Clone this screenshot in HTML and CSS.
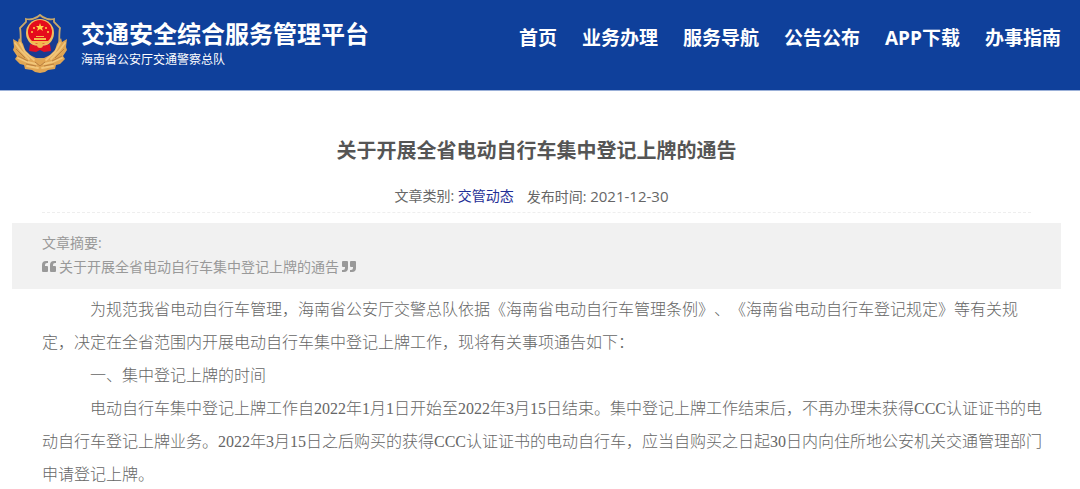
FILE: index.html
```html
<!DOCTYPE html>
<html lang="zh-CN">
<head>
<meta charset="utf-8">
<meta name="viewport" content="width=device-width, initial-scale=1">
<title>交通安全综合服务管理平台</title>
<link rel="stylesheet" href="styles.css">
</head>
<body>
<header class="site-header">
  <div class="brand">
    <svg class="emblem" viewBox="0 0 56 60" aria-hidden="true">
      <path d="M28 1C24 5 18 6 14 5L14 8L8 14C10 24 6 38 15 45H41C50 38 46 24 48 14L42 8V5C38 6 32 5 28 1Z" fill="#193b91" stroke="#c9a869" stroke-width="1.8"/>
      <path d="M1 25L6 28L7 24L11 30L13 36L18 41L24 44L28 46L32 44L38 41L43 36L45 30L49 24L50 28L55 25L54 33L55 36L51 42L53 45L48 50L44 51L43 55L36 56L33 58L28 59L23 58L20 56L13 55L12 51L8 50L3 45L5 42L1 36L2 33Z" fill="#e0a654"/>
      <path d="M3 29L9 37L17 45M53 29L47 37L39 45M8 29L13 38L22 46M48 29L43 38L34 46M6 44L15 48L24 50M50 44L41 48L32 50M15 52L26 54M41 52L30 54" fill="none" stroke="#f2c67a" stroke-width="1.8" stroke-linecap="round"/>
      <path d="M4 35L13 44M52 35L43 44M6 42L16 47M50 42L40 47M14 50L24 52M42 50L32 52M23 48L28 52L33 48" fill="none" stroke="#bb8040" stroke-width="1"/>
      <circle cx="28" cy="19" r="14" fill="#f2bd60"/>
      <circle cx="28" cy="18" r="12" fill="#e50b1c"/>
      <path d="M18 30Q28 34 38 30L39 37L32 38L28 36L24 38L17 37Z" fill="#df1024"/>
      <path d="M19 27H37V29H19ZM22 24H34V26H22ZM24 22H32V23H24Z" fill="#f5b84c"/>
      <circle cx="28" cy="31" r="3" fill="#f1b74e"/>
      <path d="M28 9L29 12H32L30 14L31 17L28 15L25 17L26 14L24 12H27Z" fill="#ffd348"/>
      <g fill="#ffd348"><circle cx="22" cy="14" r="1"/><circle cx="34" cy="14" r="1"/><circle cx="20" cy="18" r="1"/><circle cx="36" cy="18" r="1"/></g>
    </svg>
    <div>
      <div class="site-name">交通安全综合服务管理平台</div>
      <div class="site-owner">海南省公安厅交通警察总队</div>
    </div>
  </div>
  <nav class="main-nav">
    <a href="#">首页</a>
    <a href="#">业务办理</a>
    <a href="#">服务导航</a>
    <a href="#">公告公布</a>
    <a href="#">APP下载</a>
    <a href="#">办事指南</a>
  </nav>
</header>
<main class="article">
  <div class="article-head">
    <h1>关于开展全省电动自行车集中登记上牌的通告</h1>
    <div class="meta">
      <span>文章类别: <a href="#">交管动态</a></span>
      <span>发布时间: <time datetime="2021-12-30">2021-12-30</time></span>
    </div>
  </div>
  <section class="summary">
    <div>文章摘要:</div>
    <div class="quote">
      <svg viewBox="0 0 14 12" aria-hidden="true"><path id="q" d="M6 0V2H5Q3 2 3 4V5H5Q6 5 6 6V10Q6 11 5 11H1Q0 11 0 10V4Q0 0 4 0ZM14 0V2H13Q11 2 11 4V5H13Q14 5 14 6V10Q14 11 13 11H9Q8 11 8 10V4Q8 0 12 0Z"/></svg>
      <span>关于开展全省电动自行车集中登记上牌的通告</span>
      <svg viewBox="0 0 14 12" aria-hidden="true"><use href="#q" transform="rotate(180 7 5.5)"/></svg>
    </div>
  </section>
  <div class="content">
    <p>为规范我省电动自行车管理，海南省公安厅交警总队依据《海南省电动自行车管理条例》、《海南省电动自行车登记规定》等有关规定，决定在全省范围内开展电动自行车集中登记上牌工作，现将有关事项通告如下：</p>
    <p>一、集中登记上牌的时间</p>
    <p>电动自行车集中登记上牌工作自2022年1月1日开始至2022年3月15日结束。集中登记上牌工作结束后，不再办理未获得CCC认证证书的电动自行车登记上牌业务。2022年3月15日之后购买的获得CCC认证证书的电动自行车，应当自购买之日起30日内向住所地公安机关交通管理部门申请登记上牌。</p>
  </div>
</main>
</body>
</html>
```
FILE: styles.css
```css
* { box-sizing: border-box; }
body {
  margin: 0;
  background: #fff;
  color: #666;
  font: 14px/24px "Open Sans", "Noto Sans CJK SC", sans-serif;
}
a { text-decoration: none; }
.site-header {
  display: flex;
  justify-content: space-between;
  align-items: flex-start;
  padding: 14px 19px 14px 12px;
  min-height: 91px;
  background: #0f409b;
  border-bottom: 1px solid #9bb0d8;
  color: #fff;
}
.brand { display: flex; gap: 13px; }
.emblem { width: 56px; height: 60px; }
.site-name {
  margin-top: 4px;
  font-size: 24px;
  line-height: 32px;
  font-weight: 700;
}
.site-owner { font-size: 12px; line-height: 20px; }
.main-nav { display: flex; gap: 25px; padding-top: 8px; }
.main-nav a {
  color: #fff;
  font-size: 19px;
  line-height: 32px;
  font-weight: 700;
  white-space: nowrap;
}
.article { padding: 44px 19px 0 12px; }
.article-head {
  margin: 0 30px;
  padding-bottom: 3px;
  border-bottom: 1px dashed #eee;
  text-align: center;
}
h1 {
  margin: 0 0 17px;
  color: #555;
  font-size: 20px;
  line-height: 32px;
}
.meta { display: flex; justify-content: center; gap: 13px; padding-right: 10px; line-height: 24px; }
.meta a { color: #1f2f96; }
.meta time { font-size: 15px; }
.summary {
  margin-top: 10px;
  padding: 8px 30px 10px;
  background: #f1f1f1;
  color: #999;
}
.quote { display: flex; align-items: center; gap: 3px; }
.quote svg { width: 14px; height: 12px; fill: #999; }
.content {
  padding: 4px 0 0 30px;
  margin-right: 15px;
  color: #666;
  font-family: "Liberation Serif", "Noto Sans CJK SC", serif;
  font-size: 16px;
  font-weight: 300;
  line-height: 33px;
  text-spacing-trim: space-all;
}
.content p { margin: 0; text-indent: 3em; }
```
